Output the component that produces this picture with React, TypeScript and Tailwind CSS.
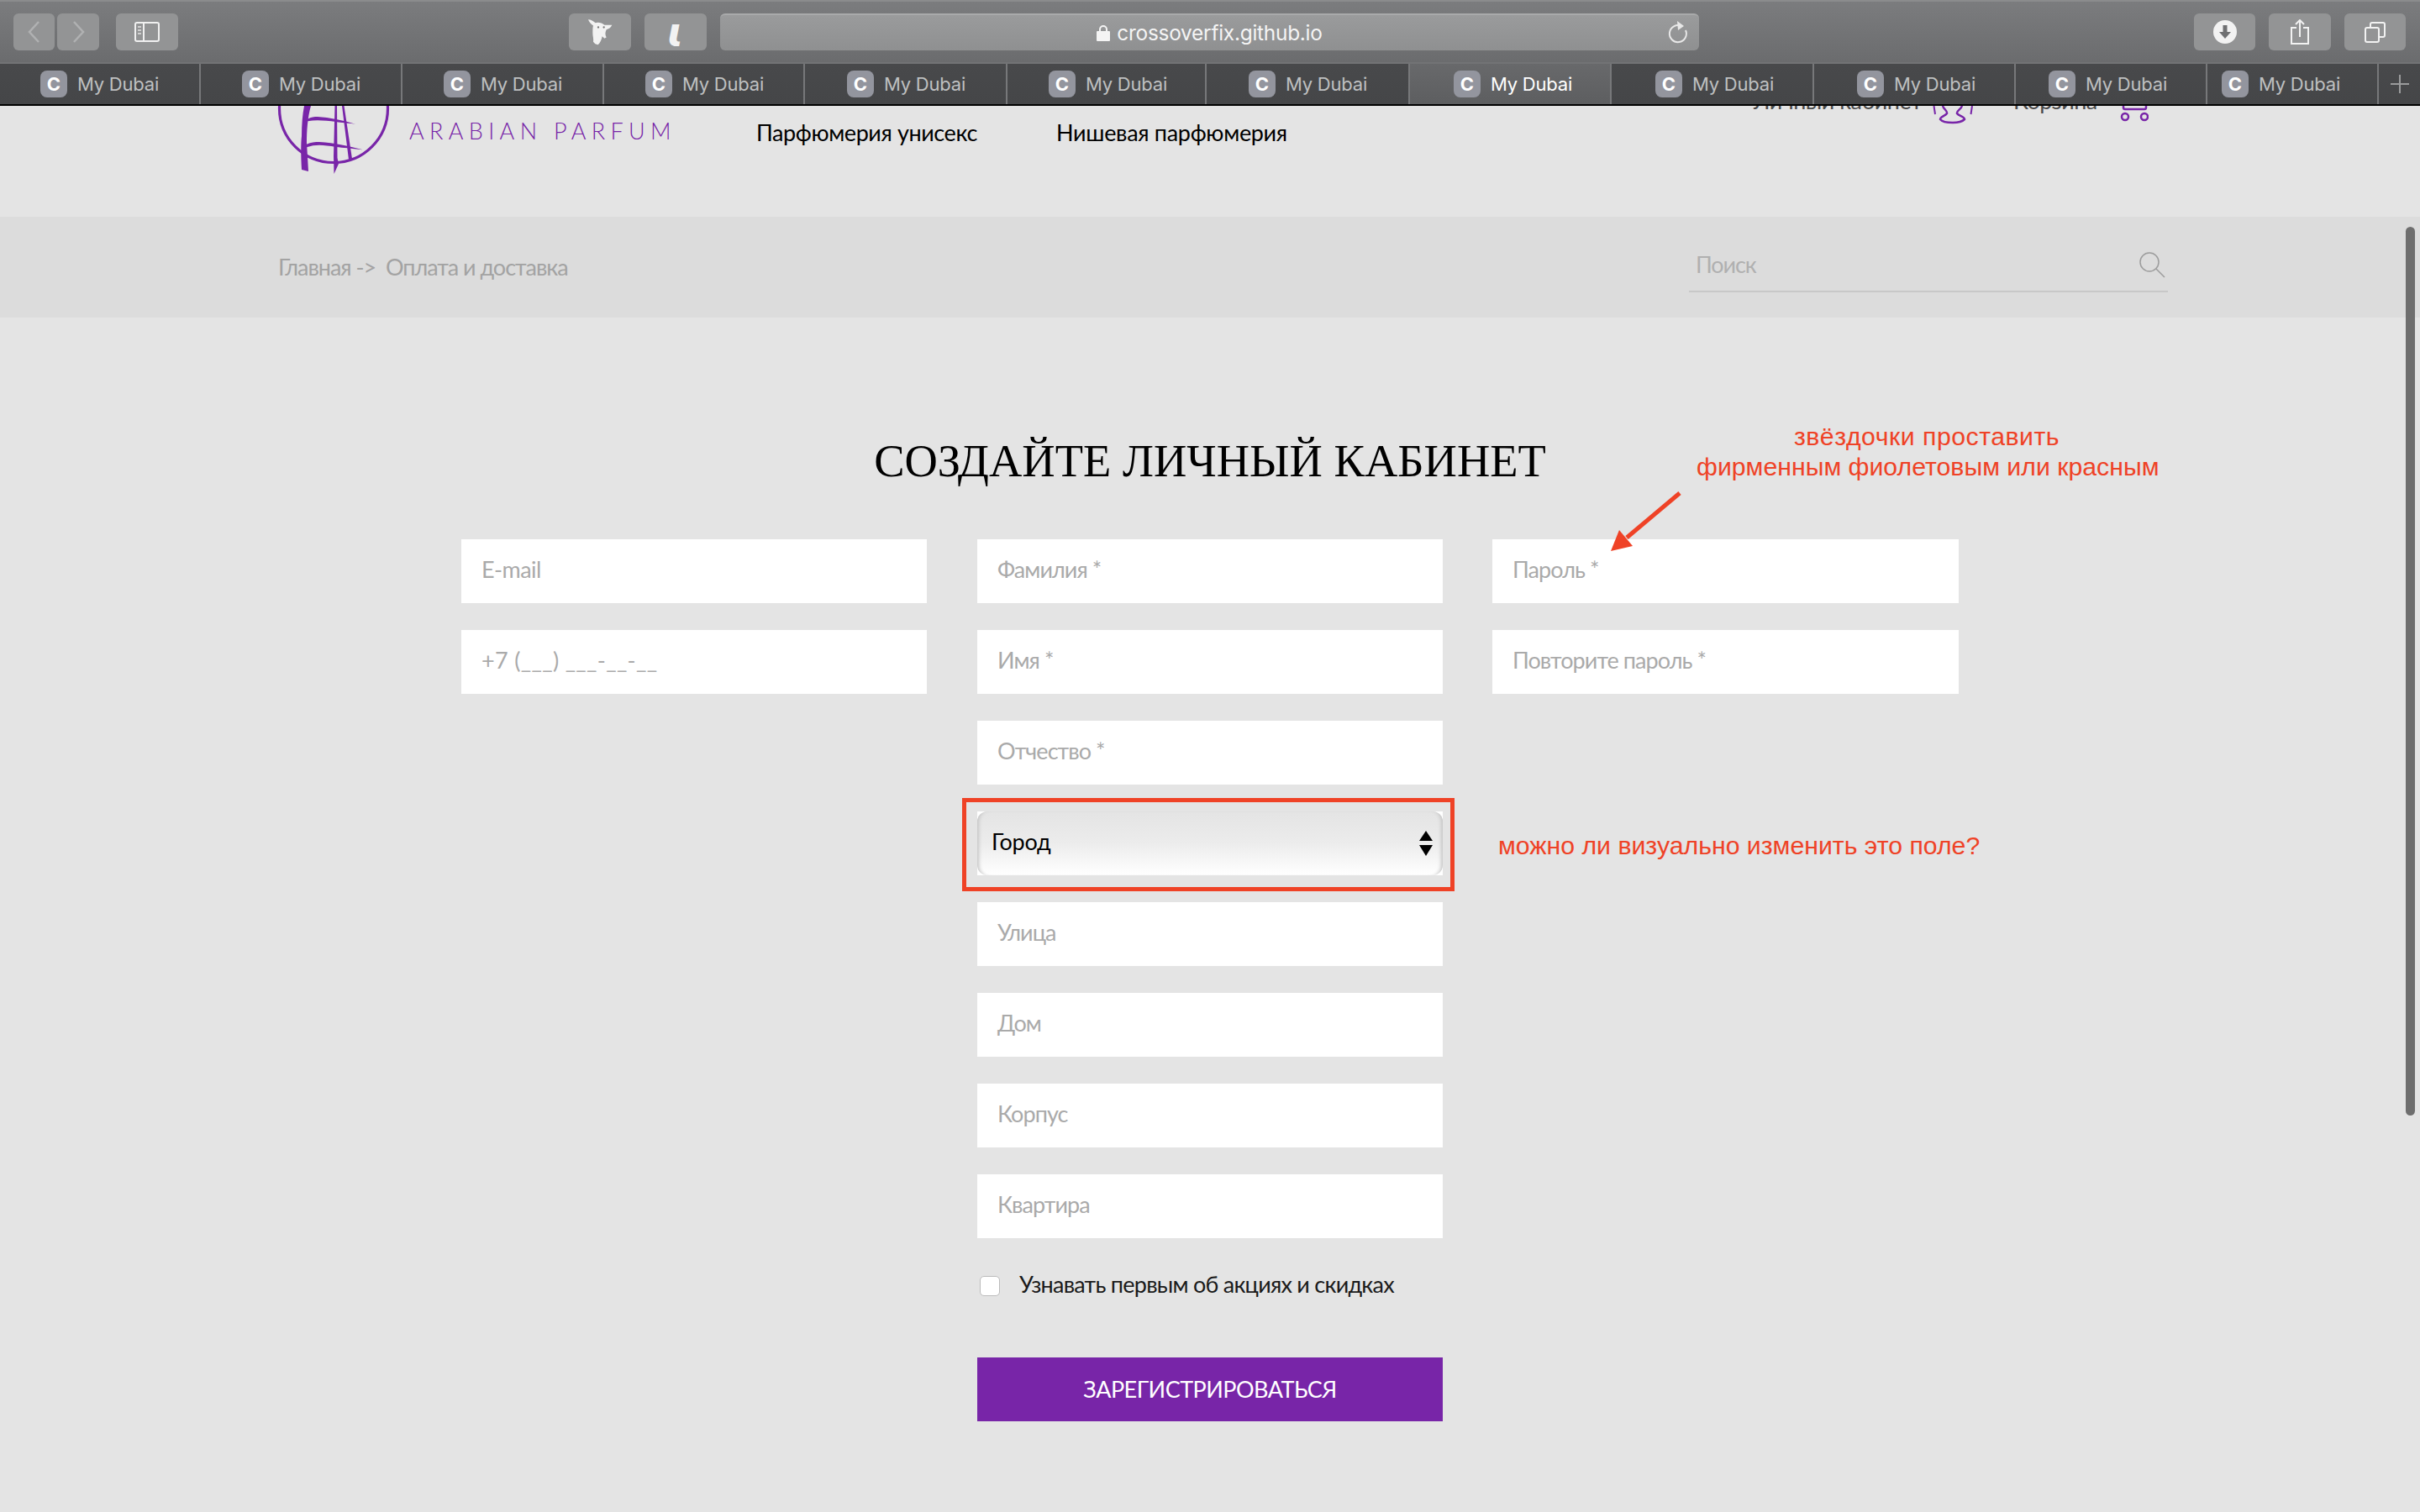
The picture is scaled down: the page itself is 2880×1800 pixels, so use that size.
import React from "react";

const tabs = [
  { w: "w-[239px]", pl: "pl-[48px]" }, { w: "w-[240px]", pl: "pl-[49px]" }, { w: "w-[240px]", pl: "pl-[49px]" }, { w: "w-[239px]", pl: "pl-[49px]" },
  { w: "w-[241px]", pl: "pl-[50px]" }, { w: "w-[237px]", pl: "pl-[49px]" }, { w: "w-[242px]", pl: "pl-[50px]" },
  { w: "w-[240px]", pl: "pl-[52px]", active: true }, { w: "w-[241px]", pl: "pl-[52px]" }, { w: "w-[240px]", pl: "pl-[51px]" }, { w: "w-[228px]", pl: "pl-[39px]" }, { w: "w-[204px]", pl: "pl-[17px]" },
];

const SANS = "font-['Lato','Noto_Sans',sans-serif]";

function Tab({ w, pl, active }: { w: string; pl: string; active?: boolean }) {
  return (
    <div className={`${w} ${pl} h-full flex items-center gap-3 border-r-2 border-[#77787a] ${active ? "bg-gradient-to-b from-[#68696b] to-[#5d5e60] text-white" : "text-[#bfc0c1]"}`}>
      <div className="w-8 h-8 rounded-lg bg-[#93959e] flex items-center justify-center text-white font-bold text-[22px] font-['Inter',sans-serif]">C</div>
      <span className="text-[22px] font-['Inter',sans-serif] tracking-[-0.01em]">My Dubai</span>
    </div>
  );
}

function ToolButton({ w, children }: { w: string; children?: React.ReactNode }) {
  return <div className={`${w} h-11 rounded-md bg-[#939495] flex items-center justify-center`}>{children}</div>;
}

function Field({ label, track = "tracking-[-0.035em]" }: { label: string; track?: string }) {
  return (
    <div className={`h-[76px] bg-white pl-6 pb-[4px] flex items-center text-[27px] ${track} text-[#aaaaaa] ${SANS}`}>{label}</div>
  );
}

function Logo() {
  return (
    <svg width="150" height="90" viewBox="0 0 150 90" className="shrink-0" fill="none">
      <circle cx="67" cy="3" r="64.5" stroke="#7825a8" strokeWidth="3.2" />
      <path d="M32 0 L40 0 C36 14 35 30 35 44 L37 78 L29 76 C28 60 28 44 29 36 C29 22 30 10 32 0 Z" fill="#7825a8" />
      <path d="M68.5 0 H71 L71.5 62 L73 69 L67.5 81 L67 60 Z" fill="#7825a8" />
      <path d="M77 0 H79.5 L89 63 L85 64 Z" fill="#7825a8" />
      <path d="M36 15.7 C40 13.5 44 13 48 13 C62 14 78 17 93 21.7 C80 20 72 19.5 70 19 C62 18 55 17.5 48 17.3 C44 17.3 40 17.5 36 18.2 Z" fill="#7825a8" />
      <path d="M35 45.7 C40 43.5 45 43 50 43 C68 44 86 48 101.7 52.3 C88 50.5 78 50 70 49 C62 47.5 56 46.9 50 46.7 C45 46.7 40 47.5 35 49.2 Z" fill="#7825a8" />
    </svg>
  );
}

export default function App() {
  return (
    <div className={`relative w-[2880px] h-[1800px] overflow-hidden bg-[#e4e4e4] ${SANS}`}>
      {/* Browser toolbar */}
      <div className="h-[76px] border-t-2 border-b-2 border-t-[#8b8c8d] border-b-[#727375] bg-gradient-to-b from-[#7b7c7e] to-[#6b6c6e] flex items-center pl-4 pr-[17px]">
        <div className="flex gap-[3px] mr-5">
          <ToolButton w="w-[49px]">
            <svg width="18" height="28" viewBox="0 0 18 28" fill="none"><path d="M14 2 L3 14 L14 26" stroke="#b0b1b2" strokeWidth="2.5" /></svg>
          </ToolButton>
          <ToolButton w="w-[50px]">
            <svg width="18" height="28" viewBox="0 0 18 28" fill="none"><path d="M4 2 L15 14 L4 26" stroke="#b0b1b2" strokeWidth="2.5" /></svg>
          </ToolButton>
        </div>
        <ToolButton w="w-[74px]">
          <svg width="30" height="24" viewBox="0 0 30 24" fill="none">
            <rect x="1" y="1" width="28" height="22" rx="2" stroke="#f0f0f0" strokeWidth="2" />
            <path d="M11 1 V23" stroke="#f0f0f0" strokeWidth="2" />
            <path d="M4 6 H8 M4 10 H8 M4 14 H8" stroke="#d0d0d0" strokeWidth="2" />
          </svg>
        </ToolButton>
        <div className="w-[465px]" />
        <ToolButton w="w-[74px]">
          <svg width="29" height="33" viewBox="90 35 87 98">
            <path d="M90 38 C100 38 108 44 116 50 C125 46 140 50 148 58 L175 58 C172 66 165 72 155 74 C150 84 150 92 155 102 L148 106 L140 98 C138 110 132 122 125 128 C118 128 112 124 108 118 C110 108 106 98 106 86 C106 76 106 66 108 60 C100 54 93 46 90 38 Z" fill="#f2f2f2" />
            <circle cx="126" cy="66" r="3.5" fill="#777" />
            <circle cx="146" cy="66" r="3.5" fill="#777" />
          </svg>
        </ToolButton>
        <div className="w-4" />
        <ToolButton w="w-[74px]">
          <span className="text-[48px] leading-none font-bold italic text-[#f2f2f2] font-['DejaVu_Sans',sans-serif]">ɩ</span>
        </ToolButton>
        <div className="w-4" />
        <div className="w-[1165px] h-11 rounded-md bg-gradient-to-b from-[#9a9b9c] to-[#8f9091] border-t-2 border-[#a9aaab] relative flex items-center justify-center gap-2 text-[24.4px] text-[#f4f4f4] font-['Inter',sans-serif]">
          <svg width="16" height="20" viewBox="0 0 16 20" fill="none">
            <path d="M4 9 V6 a4 4 0 0 1 8 0 V9" stroke="#f4f4f4" strokeWidth="2" />
            <rect x="0" y="8" width="16" height="12" rx="1" fill="#f4f4f4" />
          </svg>
          <span className="tracking-[-0.01em]">crossoverfix.github.io</span>
          <svg className="absolute right-3 top-[6px]" width="26" height="30" viewBox="0 0 26 30" fill="none">
            <path d="M17 7 A10 10 0 1 0 22 12" stroke="#e8e8e8" strokeWidth="2" />
            <path d="M12 1 L20 7 L13 12 Z" fill="#e8e8e8" />
          </svg>
        </div>
        <div className="flex-1" />
        <div className="flex gap-4">
          <ToolButton w="w-[73px]">
            <svg width="28" height="28" viewBox="0 0 28 28">
              <circle cx="14" cy="14" r="14" fill="#f2f2f2" />
              <path d="M11.5 6 H16.5 V14 H21 L14 22 L7 14 H11.5 Z" fill="#6f7072" />
            </svg>
          </ToolButton>
          <ToolButton w="w-[74px]">
            <svg width="22" height="30" viewBox="0 0 22 30" fill="none">
              <path d="M7 10 H1 V29 H21 V10 H15" stroke="#f2f2f2" strokeWidth="2" />
              <path d="M11 21 V1 M6 6 L11 1 L16 6" stroke="#f2f2f2" strokeWidth="2" />
            </svg>
          </ToolButton>
          <ToolButton w="w-[73px]">
            <svg width="25" height="25" viewBox="0 0 25 25" fill="none">
              <rect x="1" y="7" width="16" height="17" rx="2" stroke="#f2f2f2" strokeWidth="2" />
              <path d="M7 7 V3 a2 2 0 0 1 2-2 H22 a2 2 0 0 1 2 2 V16 a2 2 0 0 1-2 2 H17" stroke="#f2f2f2" strokeWidth="2" />
            </svg>
          </ToolButton>
        </div>
      </div>

      {/* Tab strip */}
      <div className="h-[50px] flex bg-gradient-to-b from-[#48494b] to-[#454648] border-b-2 border-black">
        {tabs.map((t, i) => <Tab key={i} w={t.w} pl={t.pl} active={t.active} />)}
        <div className="flex-1 flex items-center justify-center">
          <svg width="24" height="24" viewBox="0 0 24 24"><path d="M12 1 V23 M1 12 H23" stroke="#9a9b9c" strokeWidth="2" /></svg>
        </div>
      </div>

      {/* Header, scrolled under the toolbar */}
      <div className="h-[132px] overflow-hidden pl-[330px] flex items-start">
        <Logo />
        <div className="ml-[7px] mt-[17px] text-[27px] leading-[26px] font-light tracking-[0.235em] text-[#7825a8] w-[413px] whitespace-nowrap">ARABIAN PARFUM</div>
        <div className="text-[27px] leading-[34px] mt-[15px] text-black w-[357px] tracking-[-0.015em] whitespace-nowrap">Парфюмерия унисекс</div>
        <div className="text-[27px] leading-[34px] mt-[15px] text-black w-[830px] tracking-[-0.012em] whitespace-nowrap">Нишевая парфюмерия</div>
        <div className="-mt-[23px] text-[27px] leading-[34px] text-[#4a4a4a] w-[213px] tracking-[-0.02em] whitespace-nowrap">Личный кабинет</div>
        <svg width="50" height="22" viewBox="0 0 50 22" fill="none" className="shrink-0 mr-[46px]">
          <path d="M1.5 0 L3 10 M47 0 L45.5 10" stroke="#7825a8" strokeWidth="2" />
          <path d="M12 0 C13 4 18 6 17 9 C15 12 9 13 9 16 C12 20 20 20 24 20 C30 20 35 19 38 16 C38 13 31 12 29 9 C28 6 34 4 35 0" stroke="#7825a8" strokeWidth="2.5" />
        </svg>
        <div className="-mt-[23px] text-[27px] leading-[34px] text-[#4a4a4a] w-[127px] tracking-[-0.02em] whitespace-nowrap">Корзина</div>
        <svg width="34" height="20" viewBox="0 0 34 20" fill="none" className="shrink-0">
          <path d="M4 0 V2 a2 2 0 0 0 2 2 H29 a2 2 0 0 0 2-2 V0" stroke="#7825a8" strokeWidth="2.5" />
          <circle cx="6" cy="13" r="4" stroke="#7825a8" strokeWidth="2.5" />
          <circle cx="29" cy="13" r="4" stroke="#7825a8" strokeWidth="2.5" />
        </svg>
      </div>

      {/* Breadcrumb band */}
      <div className="h-[120px] bg-[#dcdcdc] pl-[331px] flex items-center">
        <div className="w-[1679px] text-[27px] tracking-[-0.038em] text-[#a3a3a3] whitespace-nowrap">Главная -&gt;&nbsp; Оплата и доставка</div>
        <div className="w-[570px] h-[63px] mt-[-4px] border-b-2 border-[#c8c8c8] flex items-center justify-between pl-2 pr-[3px] text-[27px] tracking-[-0.04em] text-[#b0b0b0]">
          <span>Поиск</span>
          <svg width="32" height="32" viewBox="0 0 32 32" fill="none">
            <circle cx="13" cy="13" r="11" stroke="#9c9c9c" strokeWidth="1.5" />
            <path d="M21 21 L31 31" stroke="#9c9c9c" strokeWidth="1.5" />
          </svg>
        </div>
      </div>

      {/* Form */}
      <div className="relative">
        <h1 className="mt-[140px] h-[62px] leading-[62px] text-center text-[54.5px] text-black font-['Liberation_Serif',serif] whitespace-nowrap">СОЗДАЙТЕ ЛИЧНЫЙ КАБИНЕТ</h1>
        <div className="mt-[62px] pl-[549px] grid grid-cols-[554px_554px_554px] gap-x-[60px] justify-start items-start">
          <div className="flex flex-col gap-8">
            <Field label="E-mail" track="tracking-[-0.02em]" />
            <Field label="+7 (___) ___-__-__" track="tracking-[0.012em]" />
          </div>
          <div className="flex flex-col gap-8">
            <Field label="Фамилия *" />
            <Field label="Имя *" />
            <Field label="Отчество *" />
            <div className="h-[76px] bg-white">
              <div className="h-full rounded-xl bg-gradient-to-b from-[#e4e4e4] via-[#ececec] to-white flex items-center justify-between pl-[17px] pr-[12px] pb-[4px] text-[27px] tracking-[-0.01em] text-black shadow-[inset_5px_0_4px_-3px_#c4c4c4,inset_-5px_0_4px_-3px_#c4c4c4]">
                <span>Город</span>
                <svg width="16" height="30" viewBox="0 0 16 30" className="mt-[4px]"><path d="M8 0 L16 12 H0 Z M0 17 H16 L8 30 Z" fill="#000" /></svg>
              </div>
            </div>
            <Field label="Улица" />
            <Field label="Дом" />
            <Field label="Корпус" />
            <Field label="Квартира" />
            <label className="mt-[9px] flex items-center gap-[23px] pl-[3px] text-[27px] leading-[34px] tracking-[-0.028em] text-[#1a1a1a] whitespace-nowrap">
              <span className="w-6 h-6 rounded-[5px] bg-white border border-[#bbbbbb]" />
              <span className="-mt-[3px]">Узнавать первым об акциях и скидках</span>
            </label>
            <button className="mt-[38px] h-[76px] bg-[#7825a8] text-white text-[27px] tracking-[-0.02em]">ЗАРЕГИСТРИРОВАТЬСЯ</button>
          </div>
          <div className="-ml-px flex flex-col gap-8">
            <Field label="Пароль *" />
            <Field label="Повторите пароль *" />
          </div>
        </div>
      </div>

      {/* Review annotations */}
      <div className="absolute left-[1145px] top-[950px] w-[586px] h-[111px] border-[5px] border-[#ef4226]" />
      <div className="absolute left-[1783px] top-[989px] text-[30.25px] leading-9 text-[#ef4226] font-['Liberation_Sans',sans-serif] whitespace-nowrap">можно ли визуально изменить это поле?</div>
      <div className="absolute left-[2019px] top-[502px] w-[548px] text-center text-[30.25px] leading-9 text-[#ef4226] font-['Liberation_Sans',sans-serif] whitespace-nowrap">
        <div className="tracking-[0.5px]">звёздочки проставить</div>
        <div>фирменным фиолетовым или красным</div>
      </div>
      <svg className="absolute left-[1910px] top-[580px]" width="100" height="84" viewBox="0 0 100 84">
        <path d="M89 7 L26 60" stroke="#ef4226" strokeWidth="5" />
        <path d="M7 76 L17 51 L33 70 Z" fill="#ef4226" />
      </svg>

      {/* Scrollbar */}
      <div className="absolute left-[2863px] top-[270px] w-[11px] h-[1058px] rounded-full bg-[#6e6e6e]" />
    </div>
  );
}
